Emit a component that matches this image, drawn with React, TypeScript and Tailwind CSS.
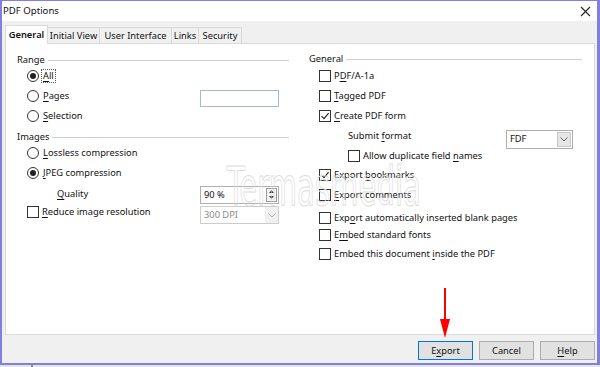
import React from "react";

const F = "font-['Noto_Sans',sans-serif]";

function U({ children }: { children: React.ReactNode }) {
  return <span className="underline underline-offset-[2px] decoration-[1px]">{children}</span>;
}

function Radio({ on }: { on?: boolean }) {
  return (
    <span className="w-[12px] h-[12px] rounded-full border border-[#333] bg-white flex items-center justify-center shrink-0">
      {on && <span className="w-[6px] h-[6px] rounded-full bg-[#222]" />}
    </span>
  );
}

function Check({ on }: { on?: boolean }) {
  return (
    <span className="w-[12px] h-[12px] border border-[#333] bg-white flex items-center justify-center shrink-0">
      {on && (
        <svg width="10" height="10" viewBox="0 0 10 10">
          <path d="M1.5 5.2 L4 7.6 L8.6 2.2" fill="none" stroke="#222" strokeWidth="1.1" />
        </svg>
      )}
    </span>
  );
}

function Chevron({ color = "#606060" }: { color?: string }) {
  return (
    <svg width="8" height="5" viewBox="0 0 8 5">
      <path d="M0.5 0.5 L4 4 L7.5 0.5" fill="none" stroke={color} strokeWidth="1" />
    </svg>
  );
}

function Section({ label }: { label: string }) {
  return (
    <div className="h-[16px] flex items-center">
      <span className="pr-[3px]">{label}</span>
      <span className="flex-1 h-px bg-[#d0d0d0]" />
    </div>
  );
}

function Row({ children, mt, indent }: { children: React.ReactNode; mt: string; indent: string }) {
  return <div className={`h-[16px] flex items-center whitespace-nowrap ${mt} ${indent}`}>{children}</div>;
}

export default function App() {
  return (
    <div className={`w-[600px] h-[367px] bg-[#e4e4e4] relative overflow-hidden ${F} text-[9.3px] text-[#111] leading-none`}>
      <div className="w-[600px] h-[365px] border-t border-l-2 border-r-[3px] border-b-2 border-[#8080de] flex flex-col">
        {/* Title bar */}
        <div className="h-[20px] bg-white flex items-center justify-between pl-[1px] pr-[6px]">
          <span className="text-[9.6px]">PDF Options</span>
          <svg width="11" height="11" viewBox="0 0 11 11">
            <path d="M1 1 L10 10 M10 1 L1 10" stroke="#222" strokeWidth="1.1" />
          </svg>
        </div>
        {/* Body */}
        <div className="flex-1 bg-[#f0f0f0] pl-[3px] pr-[2px] pt-[4px] pb-[3px] flex flex-col">
          {/* Tabs */}
          <div className="h-[18px] flex items-end relative z-10 whitespace-nowrap">
            <div className="h-[19px] -mb-px w-[43px] bg-white border border-b-0 border-[#d9d9d9] flex items-center justify-center font-semibold">
              General
            </div>
            <div className="h-[16px] w-[52px] border-t border-r border-[#d9d9d9] flex items-center justify-center bg-[#f0f0f0]">Initial View</div>
            <div className="h-[16px] w-[72px] border-t border-r border-[#d9d9d9] flex items-center justify-center bg-[#f0f0f0]">User Interface</div>
            <div className="h-[16px] w-[27px] border-t border-r border-[#d9d9d9] flex items-center justify-center bg-[#f0f0f0]">Links</div>
            <div className="h-[16px] w-[43px] border-t border-r border-[#d9d9d9] flex items-center justify-center bg-[#f0f0f0]">Security</div>
          </div>
          {/* Panel */}
          <div className="h-[292px] bg-white border border-[#d9d9d9] pl-[11px] pr-[10px] pt-[8px] grid grid-cols-[272px_273px] gap-x-[20px] items-start">
            {/* Left column */}
            <div className="flex flex-col">
              <Section label="Range" />
              <Row mt="mt-0" indent="pl-[10px]">
                <Radio on />
                <span className="ml-[3px] px-[1px] py-[1px] outline outline-1 outline-dotted outline-[#555]"><U>A</U>ll</span>
              </Row>
              <Row mt="mt-[4px]" indent="pl-[10px]">
                <Radio />
                <span className="ml-[4px]"><U>P</U>ages</span>
                <span className="ml-auto mr-[10px] mt-[5px] w-[79px] h-[17px] border border-[#a6b9d0] bg-white" />
              </Row>
              <Row mt="mt-[4px]" indent="pl-[10px]">
                <Radio />
                <span className="ml-[4px]"><U>S</U>election</span>
              </Row>
              <div className="mt-[5px]"><Section label="Images" /></div>
              <Row mt="mt-0" indent="pl-[10px]">
                <Radio />
                <span className="ml-[4px]"><U>L</U>ossless compression</span>
              </Row>
              <Row mt="mt-[4px]" indent="pl-[10px]">
                <Radio on />
                <span className="ml-[4px]"><U>J</U>PEG compression</span>
              </Row>
              <Row mt="mt-[5px]" indent="pl-[40px]">
                <span><U>Q</U>uality</span>
                <span className="ml-auto mr-[10px] mt-[1px] w-[79px] h-[18px] border border-[#b0b0b0] bg-white flex items-center pl-[3px] pr-[1px]">
                  <span className="flex-1">90 %</span>
                  <span className="w-[11px] h-[14px] border border-[#9a9a9a] flex flex-col items-center justify-around bg-[#f4f4f4]">
                    <svg width="5" height="3" viewBox="0 0 5 3"><path d="M0 3 L2.5 0 L5 3Z" fill="#333" /></svg>
                    <svg width="5" height="3" viewBox="0 0 5 3"><path d="M0 0 L2.5 3 L5 0Z" fill="#333" /></svg>
                  </span>
                </span>
              </Row>
              <Row mt="mt-[2px]" indent="pl-[10px]">
                <Check />
                <span className="ml-[3px]"><U>R</U>educe image resolution</span>
                <span className="ml-auto mr-[10px] mt-[6px] w-[79px] h-[18px] border border-[#cccccc] bg-white flex items-center pl-[3px]">
                  <span className="flex-1 text-[#8a8a8a]">300 DPI</span>
                  <span className="w-[13px] h-[16px] bg-[#f0f0f0] flex items-center justify-center">
                    <Chevron color="#b0b0b0" />
                  </span>
                </span>
              </Row>
            </div>
            {/* Right column */}
            <div className="flex flex-col -mt-[1px]">
              <Section label="General" />
              <Row mt="mt-[1px]" indent="pl-[10px]">
                <Check />
                <span className="ml-[3px]">P<U>D</U>F/A-1a</span>
              </Row>
              <Row mt="mt-[4px]" indent="pl-[10px]">
                <Check />
                <span className="ml-[3px]"><U>T</U>agged PDF</span>
              </Row>
              <Row mt="mt-[4px]" indent="pl-[10px]">
                <Check on />
                <span className="ml-[3px]"><U>C</U>reate PDF form</span>
              </Row>
              <Row mt="mt-[4px]" indent="pl-[39px]">
                <span>Submit <U>f</U>ormat</span>
                <span className="ml-auto mr-[9px] mt-[6px] w-[67px] h-[19px] border border-[#adadad] bg-white flex items-center pl-[3px] pr-[1px]">
                  <span className="flex-1">FDF</span>
                  <span className="w-[14px] h-[15px] bg-[#e6e6e6] border border-[#c8c8c8] flex items-center justify-center">
                    <Chevron />
                  </span>
                </span>
              </Row>
              <Row mt="mt-[4px]" indent="pl-[39px]">
                <Check />
                <span className="ml-[3px]">Allow duplicate field <U>n</U>ames</span>
              </Row>
              <Row mt="mt-[3px]" indent="pl-[10px]">
                <Check on />
                <span className="ml-[3px]">Export <U>b</U>ookmarks</span>
              </Row>
              <Row mt="mt-[4px]" indent="pl-[10px]">
                <Check />
                <span className="ml-[3px]"><U>E</U>xport comments</span>
              </Row>
              <Row mt="mt-[7px]" indent="pl-[10px]">
                <Check />
                <span className="ml-[3px]">Exp<U>o</U>rt automatically inserted blank pages</span>
              </Row>
              <Row mt="mt-[1px]" indent="pl-[10px]">
                <Check />
                <span className="ml-[3px]">E<U>m</U>bed standard fonts</span>
              </Row>
              <Row mt="mt-[3px]" indent="pl-[10px]">
                <Check />
                <span className="ml-[3px]">Embed this document <U>i</U>nside the PDF</span>
              </Row>
            </div>
          </div>
          {/* Buttons */}
          <div className="mt-[6px] h-[19px] flex justify-end gap-[6px]">
            <button className="w-[55px] h-[19px] bg-[#e1e1e1] border border-[#0078d7] flex items-center justify-center">
              E<U>x</U>port
            </button>
            <button className="w-[55px] h-[19px] bg-[#e1e1e1] border border-[#adadad] flex items-center justify-center">
              Cancel
            </button>
            <button className="w-[55px] h-[19px] bg-[#e1e1e1] border border-[#adadad] flex items-center justify-center">
              <U>H</U>elp
            </button>
          </div>
        </div>
      </div>
      {/* small tick at bottom */}
      <div className="absolute left-[31px] top-[365px] w-[2px] h-[2px] bg-[#888]" />
      {/* Watermark */}
      <div className="absolute left-[227px] top-[160px] pointer-events-none">
        <span className="block origin-left scale-x-[0.6] text-[54px] font-['DejaVu_Sans_Condensed',sans-serif] text-transparent [-webkit-text-stroke:1px_#dcdcdc] whitespace-nowrap">
          Termasmedia
        </span>
      </div>
      {/* Red arrow */}
      <svg className="absolute left-[438px] top-[288px]" width="14" height="52" viewBox="0 0 14 52">
        <path d="M7 0 L7 34" stroke="#ff0000" strokeWidth="2" />
        <path d="M2 31 L12 31 L7 50 Z" fill="#ff0000" />
      </svg>
    </div>
  );
}
